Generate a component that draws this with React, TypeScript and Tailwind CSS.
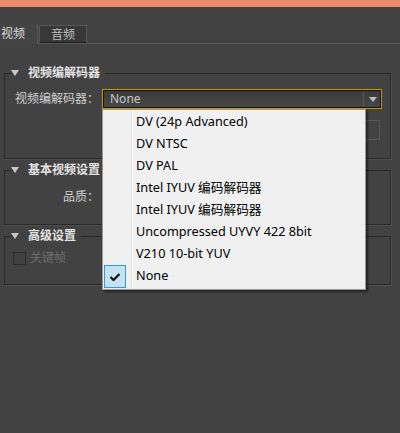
const font = { fontFamily: '"Noto Sans", "Noto Sans CJK SC", sans-serif' };

const items = [
  "DV (24p Advanced)",
  "DV NTSC",
  "DV PAL",
  "Intel IYUV 编码解码器",
  "Intel IYUV 编码解码器",
  "Uncompressed UYVY 422 8bit",
  "V210 10-bit YUV",
  "None",
];

const Tri = () => (
  <svg width="8" height="6" viewBox="0 0 8 6" className="mr-[9px]">
    <path d="M0 0 H8 L4 6 Z" fill="#c8c8c8" />
  </svg>
);

const Group = ({ title, className, children }: { title: string; className: string; children: React.ReactNode }) => (
  <fieldset className={`ml-[4px] mr-[9px] border border-[#2a2a2a] shadow-[1px_1px_0_#4e4e4e] ${className}`}>
    <legend className="ml-[6px] pr-[5px] h-[16px] flex items-center text-[12px] font-bold text-[#e4e4e4] leading-[16px]">
      <Tri />
      {title}
    </legend>
    {children}
  </fieldset>
);

const App = () => {
  return (
    <div className="relative w-[400px] h-[433px] bg-[#424242] overflow-hidden" style={font}>
      <div className="h-[7px] bg-[#ea8c6c]" />
      <div className="mt-[17px] flex h-[20px] border-b border-[#595959] text-[12px] text-[#d8d8d8]">
        <div className="w-[38px] -mb-px h-[20px] bg-[#444444] border-r border-[#5a5a5a] pl-[1px] leading-[19px]">视频</div>
        <div className="ml-[1px] mt-[1px] w-[48px] h-[18px] bg-[#383838] border border-[#575757] border-b-[#1c1c1c] text-center leading-[17px] text-[#bdbdbd]">
          音频
        </div>
      </div>

      <Group title="视频编解码器" className="mt-[21px] pb-[18px]">
        <div className="pt-[8px] flex items-center h-[28px]">
          <div className="ml-[6px] w-[88px] text-right text-[12px] text-[#d0d0d0]">视频编解码器：</div>
          <div className="ml-[3px] w-[280px] h-[20px] border border-[#c8960a] bg-gradient-to-b from-[#3a3a3a] to-[#484848] shadow-[inset_0_0_0_1px_#111] flex items-center">
            <span className="flex-1 pl-[7px] text-[12px] text-[#c8c8c8]">None</span>
            <div className="w-px h-[14px] bg-[#1a1a1a] border-r border-[#5a5a5a]" />
            <div className="w-[17px] flex justify-center">
              <svg width="8" height="5" viewBox="0 0 8 5">
                <path d="M0 0 H8 L4 5 Z" fill="#bcbcbc" />
              </svg>
            </div>
          </div>
        </div>
        <div className="mt-[11px] flex justify-end pr-[10px]">
          <div className="w-[50px] h-[20px] border border-[#575757] text-[12px] text-[#6a6a6a] text-center leading-[18px]">确定</div>
        </div>
      </Group>

      <Group title="基本视频设置" className="mt-[3px] pb-[17px]">
        <div className="pt-[9px] flex items-center h-[29px]">
          <div className="ml-[6px] w-[88px] text-right text-[12px] text-[#d0d0d0]">品质：</div>
        </div>
      </Group>

      <Group title="高级设置" className="mt-[3px] pb-[16px]">
        <div className="pt-[4px] flex items-center h-[24px] pl-[8px]">
          <div className="w-[13px] h-[13px] border border-[#2c2c2c] bg-[#404040]" />
          <span className="ml-[4px] text-[12px] text-[#6c6c6c]">关键帧</span>
        </div>
      </Group>

      <div className="absolute left-[102px] top-[109px] w-[264px] h-[181px] bg-[#f0f0f0] border border-[#979797] shadow-[2px_2px_2px_rgba(0,0,0,0.45)] py-[1px] flex">
        <div className="w-[29px] border-r border-[#e2e2e2] shadow-[1px_0_0_#ffffff]" />
        <div className="flex-1">
          {items.map((it, i) => (
            <div key={i} className="relative h-[22px] flex items-center pl-[4px] text-[12.7px] text-black">
              {it === "None" && (
                <div className="absolute -left-[28px] top-0 w-[22px] h-[23px] bg-[#c5e2f2] border border-[#3399dd] flex items-center justify-center">
                  <svg width="10" height="8" viewBox="0 0 10 8">
                    <path d="M0.5 4 L3.5 7 L9.5 1" stroke="#111" strokeWidth="2.2" fill="none" />
                  </svg>
                </div>
              )}
              {it}
            </div>
          ))}
        </div>
      </div>
    </div>
  );
};

export default App;
